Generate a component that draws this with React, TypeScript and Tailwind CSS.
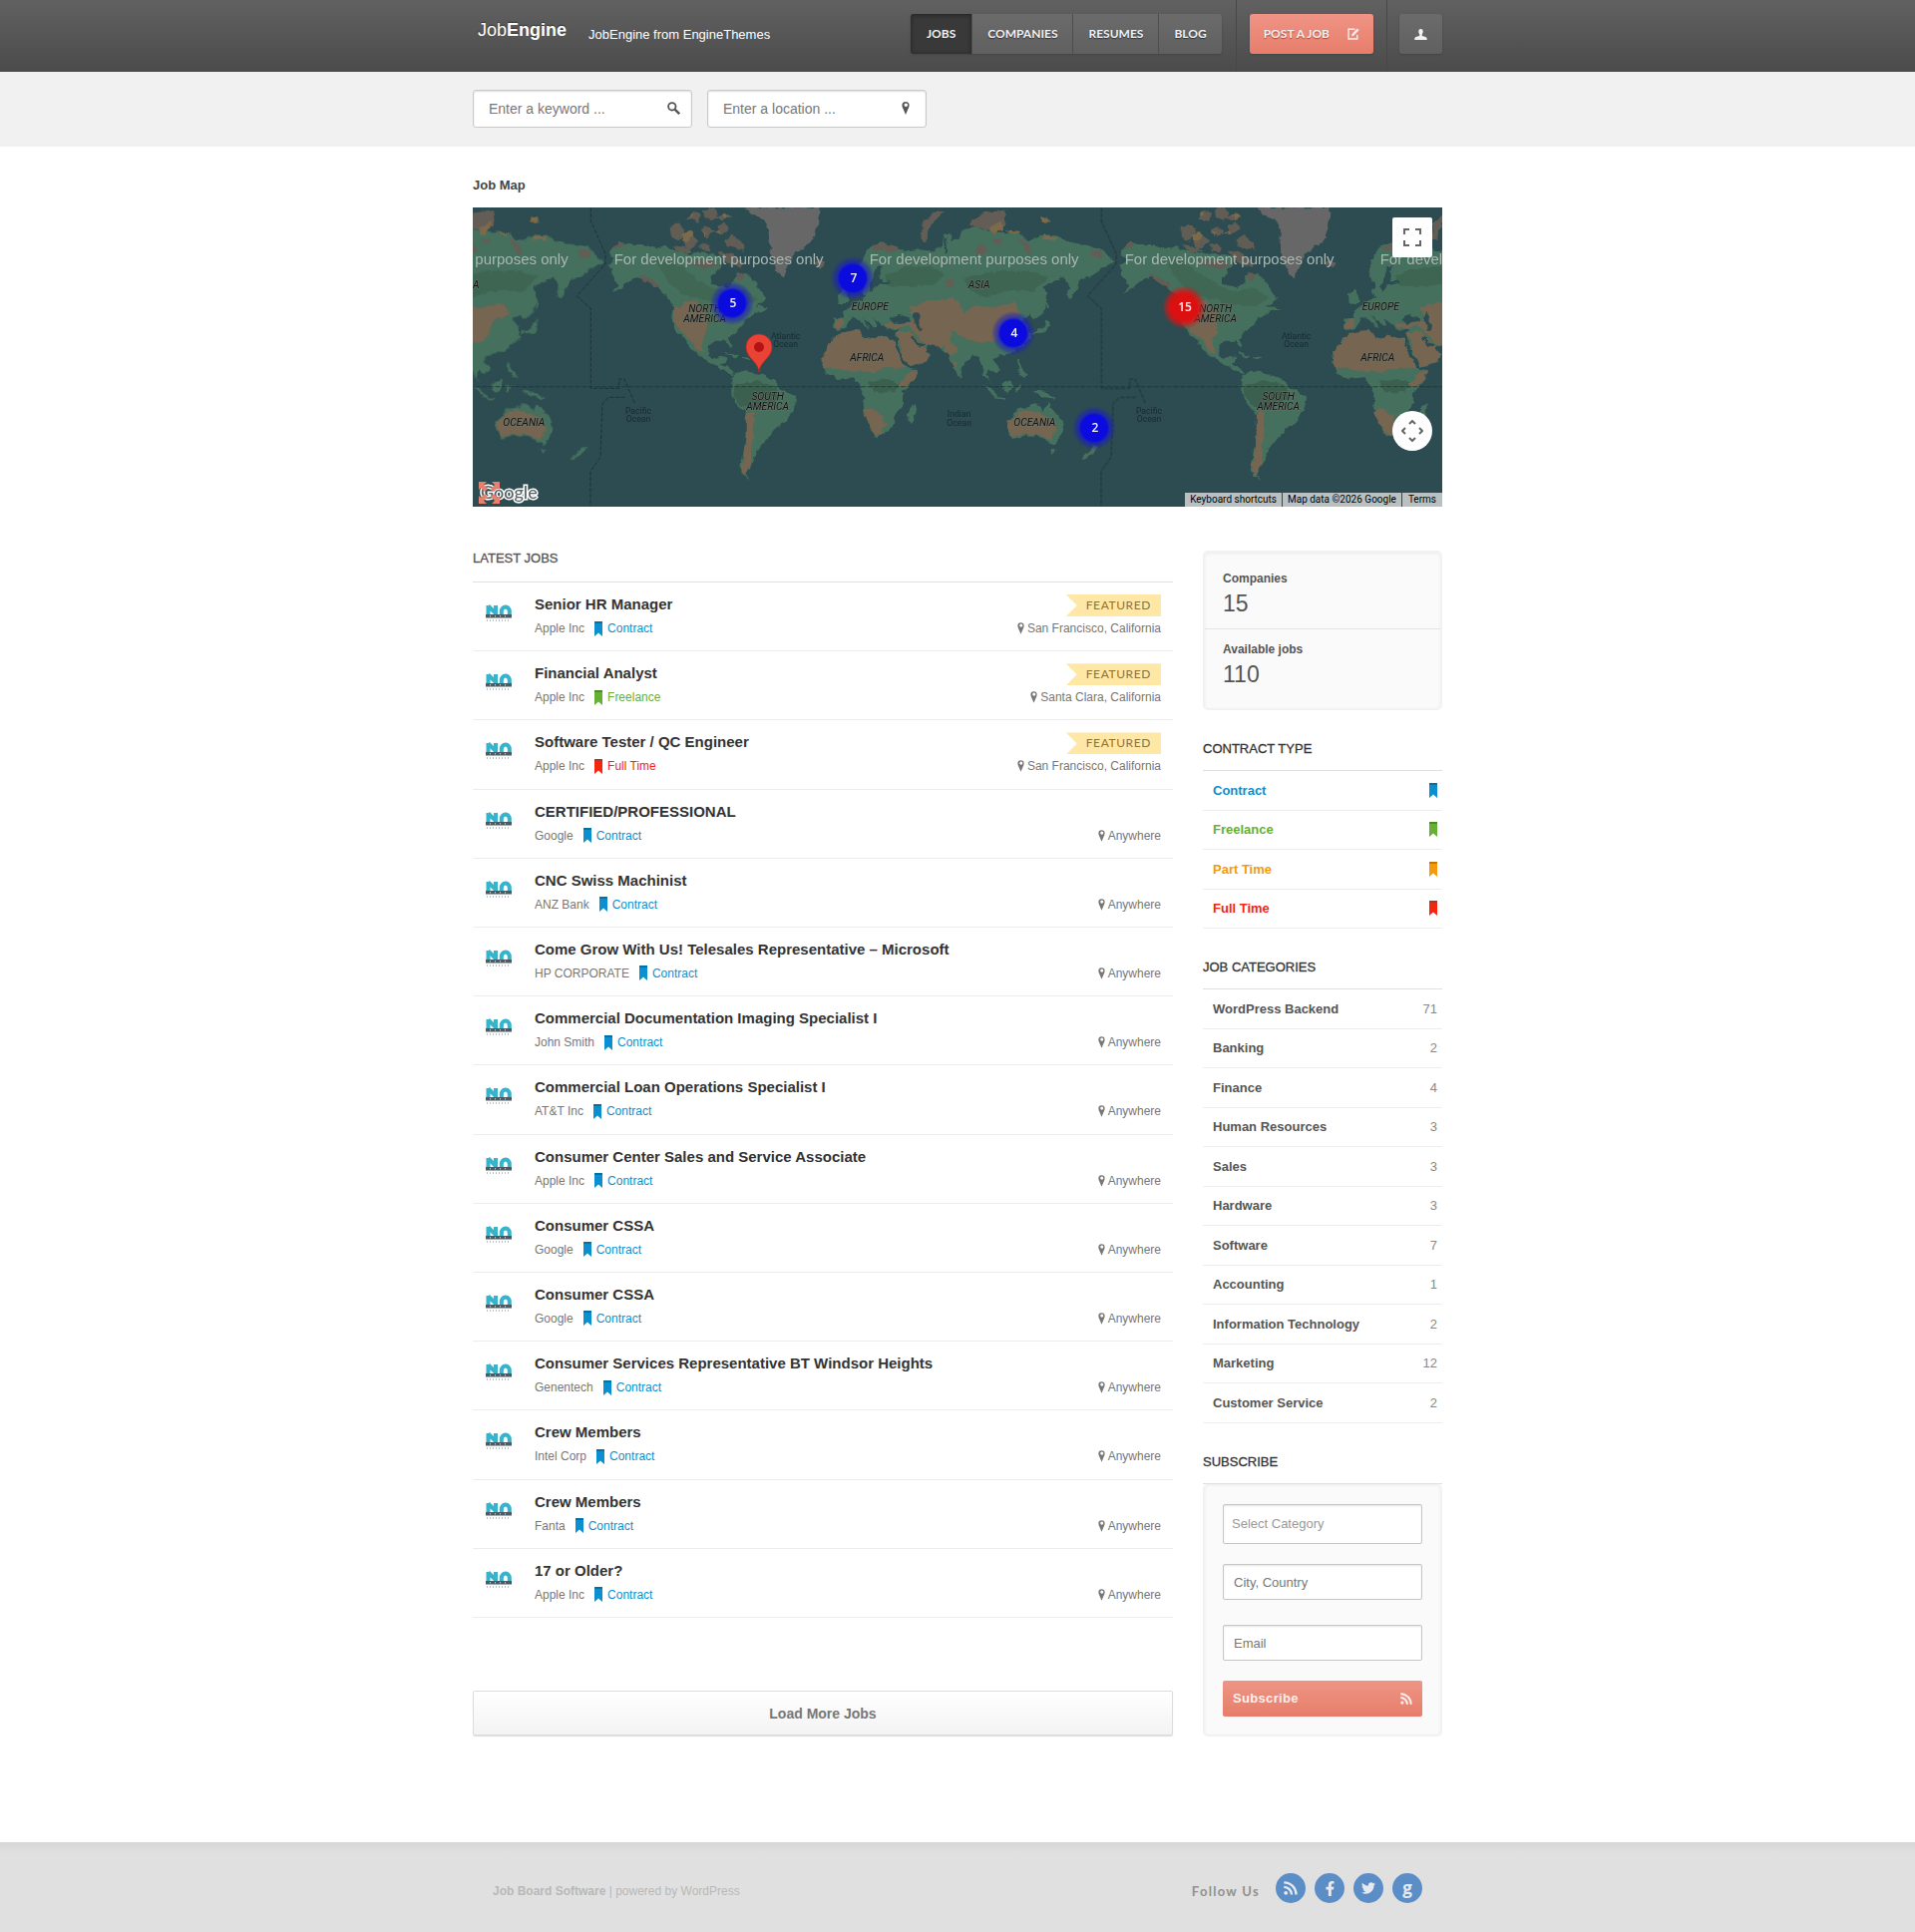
import React from 'react';
import { FaFacebookF, FaTwitter } from 'react-icons/fa';

type ContractKey = 'Contract' | 'Freelance' | 'Part Time' | 'Full Time';

interface Job {
  title: string;
  company: string;
  type: ContractKey;
  location: string;
  featured?: boolean;
}

const contractColors: Record<ContractKey, { text: string; fold: string }> = {
  Contract: { text: 'text-[#0a8fd0]', fold: '#066fa3' },
  Freelance: { text: 'text-[#65b035]', fold: '#4c8a24' },
  'Part Time': { text: 'text-[#f59a0c]', fold: '#c27504' },
  'Full Time': { text: 'text-[#f5250f]', fold: '#b8301f' },
};

const jobs: Job[] = [
  { title: 'Senior HR Manager', company: 'Apple Inc', type: 'Contract', location: 'San Francisco, California', featured: true },
  { title: 'Financial Analyst', company: 'Apple Inc', type: 'Freelance', location: 'Santa Clara, California', featured: true },
  { title: 'Software Tester / QC Engineer', company: 'Apple Inc', type: 'Full Time', location: 'San Francisco, California', featured: true },
  { title: 'CERTIFIED/PROFESSIONAL', company: 'Google', type: 'Contract', location: 'Anywhere' },
  { title: 'CNC Swiss Machinist', company: 'ANZ Bank', type: 'Contract', location: 'Anywhere' },
  { title: 'Come Grow With Us! Telesales Representative – Microsoft', company: 'HP CORPORATE', type: 'Contract', location: 'Anywhere' },
  { title: 'Commercial Documentation Imaging Specialist I', company: 'John Smith', type: 'Contract', location: 'Anywhere' },
  { title: 'Commercial Loan Operations Specialist I', company: 'AT&T Inc', type: 'Contract', location: 'Anywhere' },
  { title: 'Consumer Center Sales and Service Associate', company: 'Apple Inc', type: 'Contract', location: 'Anywhere' },
  { title: 'Consumer CSSA', company: 'Google', type: 'Contract', location: 'Anywhere' },
  { title: 'Consumer CSSA', company: 'Google', type: 'Contract', location: 'Anywhere' },
  { title: 'Consumer Services Representative BT Windsor Heights', company: 'Genentech', type: 'Contract', location: 'Anywhere' },
  { title: 'Crew Members', company: 'Intel Corp', type: 'Contract', location: 'Anywhere' },
  { title: 'Crew Members', company: 'Fanta', type: 'Contract', location: 'Anywhere' },
  { title: '17 or Older?', company: 'Apple Inc', type: 'Contract', location: 'Anywhere' },
];

const contractTypes: ContractKey[] = ['Contract', 'Freelance', 'Part Time', 'Full Time'];

const categories: [string, number][] = [
  ['WordPress Backend', 71],
  ['Banking', 2],
  ['Finance', 4],
  ['Human Resources', 3],
  ['Sales', 3],
  ['Hardware', 3],
  ['Software', 7],
  ['Accounting', 1],
  ['Information Technology', 2],
  ['Marketing', 12],
  ['Customer Service', 2],
];

/* ---------- icons ---------- */

const PinIcon = ({ className }: { className?: string }) => (
  <svg viewBox="0 0 8 13" className={className} fill="currentColor" fillRule="evenodd" aria-hidden="true">
    <path d="M4 0a3.6 3.6 0 0 0-3.6 3.6C.4 5 1 6.2 1.7 7.6L4 13l2.3-5.4C7 6.2 7.6 5 7.6 3.6A3.6 3.6 0 0 0 4 0zM4.300 1.400a1.800 1.800 0 1 1 0 3.600 1.800 1.800 0 0 1 0-3.600z" />
  </svg>
);

const SearchIcon = ({ className }: { className?: string }) => (
  <svg viewBox="0 0 13 13" className={className} fill="none" stroke="currentColor" aria-hidden="true">
    <circle cx="4.800" cy="4.800" r="3.700" strokeWidth="1.800" />
    <path d="M7.600 7.600l4.600 4.600" strokeWidth="2.400" />
  </svg>
);

const EditIcon = () => (
  <svg viewBox="0 0 12 12" className="h-3 w-3" fill="none" stroke="currentColor" aria-hidden="true">
    <path d="M7.500 1.200H1v9.800h8.800V7" strokeWidth="1.400" />
    <path d="M4 8.500l.6-2.400L9.800.6l1.700 1.600-5.300 5.600z" fill="currentColor" stroke="none" />
  </svg>
);

const UserIcon = () => (
  <svg viewBox="0 0 13 11" className="h-[11px] w-[13px]" fill="currentColor" aria-hidden="true">
    <path d="M6.500 0C4.900 0 4.200 1.200 4.300 2.800c.1 1.300.5 2.100 1 2.700v1.200C4.500 7.300.3 7.700.3 9.800V11h12.400V9.800c0-2.100-4.200-2.500-5-3.100V5.500c.5-.6.9-1.400 1-2.700C8.800 1.200 8.100 0 6.500 0z" />
  </svg>
);

const RssIcon = ({ className }: { className?: string }) => (
  <svg viewBox="0 0 14 14" className={className} fill="none" stroke="currentColor" strokeWidth="2.400" aria-hidden="true">
    <circle cx="2.200" cy="11.800" r="1.900" fill="currentColor" stroke="none" />
    <path d="M.3 5.900a7.700 7.700 0 0 1 7.700 7.700M.3 1.400a12.200 12.200 0 0 1 12.200 12.200" />
  </svg>
);

const Bookmark = ({ type }: { type: ContractKey }) => (
  <svg viewBox="0 0 8 15" className={`h-[15px] w-2 shrink-0 ${contractColors[type].text}`} aria-hidden="true">
    <path d="M0 0h8v15L4 11.500 0 15z" fill="currentColor" />
    <path d="M0 0h8v2H0z" fill={contractColors[type].fold} />
  </svg>
);

// "No logo available" placeholder used for every company
const NoLogo = () => (
  <svg viewBox="0 0 26 18" className="h-[18px] w-[26px]" role="img" aria-label="No logo available">
    <g fill="none" stroke="#35b4cb" strokeWidth="4">
      <path d="M2.500 10V1M10 10V1M2.500 1.500L10 9" />
      <path d="M15.800 10V7a4 4.500 0 0 1 8 0v3" />
    </g>
    <path d="M0 10h26v3.500H0z" fill="#4b5a63" />
    <path d="M4 11.700h18" stroke="#b6c3c9" strokeWidth="1.500" strokeDasharray="1 4" />
    <path d="M1 16h24" stroke="#a3aeb3" strokeWidth="1.400" strokeDasharray="1 2" />
  </svg>
);

/* ---------- map ---------- */

const Americas = () => (
  <g>
    <g fill="#45705d">
      <path d="M428 150L455 128 480 135 520 135 560 150 590 140 610 150 640 158 665 165 700 160 730 165 765 175 760 200 745 215 730 235 735 255 775 265 795 250 805 225 830 225 850 235 865 255 880 275 895 300 880 312 860 322 905 325 880 335 855 345 840 355 825 375 815 385 800 400 780 418 790 440 785 447 770 425 740 425 722 440 720 470 735 480 755 470 775 475 770 490 757 497 780 505 800 525 790 528 760 510 735 495 700 475 670 450 655 425 640 415 625 395 615 380 610 350 615 325 600 300 580 275 555 255 530 240 505 235 480 245 460 270 430 280 450 262 440 240 425 225 430 210 420 200 440 180 425 165z" />
      <path d="M790 535L815 515 850 520 880 525 920 545 935 570 985 590 980 620 965 650 955 670 920 690 905 715 885 735 870 750 860 780 850 800 835 825 845 842 825 830 815 810 825 770 835 700 835 650 810 620 790 590z" />
      <path d="M775 459l38 13-6 4-34-12zM822 474l26 4-8 5-18-3z" />
    </g>
    <g fill="#3c604f">
      <path d="M560 180l60 10 40 30 60 40 50 15 60-5 40 30-40 20-60 0-60-20-60-10-50-40z" opacity=".6" />
      <path d="M800 555l60-10 60 15 15 30-35 30-50 10-30-10-25-30z" />
    </g>
    <g fill="#756551">
      <path d="M615 320l25 8 10-26 35 5 30 33 0 60-15 20 8 42-16-4-22-32-30-28-25-32z" />
      <path d="M834 642l24 0 0 40-8 60-2 58-18 32-10-17 12-75z" />
    </g>
    <g fill="#615d55">
      <path d="M605 85l25-12 15 8 5 22-20 22-20-10zM645 120l22-16 25 18-15 18-22 12zM658 60l14-25 24 5-5 25zM708 30l26-5 18 18-20 22-20-10zM695 92l20-12 20 17-20 18zM748 80l26-13 8 22-26 18zM768 124l26-18 28 24 10 22-28-5-28-5zM612 138l36 5 22 16-36 0zM695 132l26 5 8 20-30-3zM745 155l45 10 36 28-8 10-38-12zM508 225l45 15 25 22-10 5-40-23zM665 180l70 5 18 15-36 8-46-12zM738 55l36-13 12 12-26 10zM808 218l20 8-5 16-18-5zM450 130l20 5-16 12-20 0z" />
    </g>
    <g fill="#7d6a4a">
      <path d="M640 105l24-10 12 13-22 20-12-5zM762 46l12-5 7 13-14 6zM702 96l12 5-7 12zM738 101l15-8 3 13zM664 42l10 0 0 8-10 4z" />
    </g>
    <path d="M832 25L1055 25 1050 80 1035 125 1000 150 975 170 960 200 948 235 930 225 915 180 905 130 905 90 890 60 850 45z" fill="#676767" />
    <path d="M1040 190l15-10 18 12-10 14-20-4z" fill="#655f5b" />
  </g>
);

const Eurasia = () => (
  <g transform="translate(1050 15)">
    <g fill="#45705d">
      <path d="M45 370L50 340 80 345 75 325 95 310 120 290 145 280 132 262 140 240 120 210 130 175 150 130 190 115 230 125 255 140 300 135 345 140 375 125 378 90 400 85 400 115 430 100 440 75 475 65 510 80 560 85 600 85 640 110 680 90 725 95 750 110 790 120 840 125 870 150 895 175 870 185 850 195 830 215 790 225 780 250 760 285 750 275 755 240 740 220 700 235 680 250 692 290 675 330 650 345 640 332 620 342 632 370 640 400 610 430 570 450 540 455 530 470 550 495 535 510 515 495 510 520 520 540 500 510 485 460 470 450 440 480 425 515 405 490 395 455 380 440 355 430 330 425 320 435 340 450 325 475 275 490 265 475 240 425 235 385 245 375 210 378 200 365 165 340 178 365 165 368 130 335 155 372 145 370 115 340 100 340 85 370 55 378z" />
      <path d="M10 470L25 430 50 400 70 385 120 378 145 405 180 395 228 405 235 430 250 465 270 495 300 498 290 525 255 565 255 600 235 630 228 660 205 690 175 700 160 680 145 640 135 615 140 580 125 545 110 520 60 525 30 510z" />
      <path d="M270 625l15-18 12-8-8 50-12 8-8-10zM500 545l15 5 30 28-12 0zM555 542l28-18 4 22-16 20-14-6zM530 578l35 4-2 5-32-4zM645 560l30 2 45 20-12 2-38-8zM598 545l14-4-6 22-8 2zM690 345l6 18-14 22-40 4 2-6 32-10zM684 282l8 0 3 30-6 0zM600 470l8 2 2 22 22 18-10 10-18-22zM60 270l20-18 12 30 0 14-30 4zM424 507l8 10-6 4zM830 725l12 6-12 15-30 22-10-2 28-26zM702 738l14 0-6 12z" />
    </g>
    <g fill="#3c604f">
      <path d="M200 215l60-25 80-5 35 20-10 30-60 10-90 0zM440 220l90-20 110 0 50 20-40 40-90 0-60 20-50-30z" opacity=".75" />
      <path d="M150 535l60-10 40 15-20 25-60 0z" />
    </g>
    <g fill="#756551">
      <path d="M10 470L25 430 50 400 70 385 120 378 145 405 180 395 228 405 240 445 265 492 200 490 170 505 90 500 20 490z" />
      <path d="M240 545l35-40 25-7-10 27-30 25zM135 622l25-7 35 20 10 25-15 35-20-5-20-35z" />
      <path d="M236 385l45 0 20 22 36 43-12 25-50 12-15-25zM275 310l25-10 40-10 60-8 30 18 10 30 30-28 50 8 70-15 20 35-50 20-20 50-20 15-40 0-40-15-40-20 0 50-30 2-50-12-30-40-20-14-60 8-10-15 70-5 30-15-20-15zM50 350l30-6-6 26-22 4zM380 420l30-2 10 20-20 18-18-14zM405 470l14 4-2 22-10-14z" />
    </g>
    <g fill="#645d55">
      <path d="M455 55l45-30 65-8-3 45-40 20-62-22zM310 100l8-50 40-30 16 2-34 40-16 50zM470 130l30-12 10 22-25 14zM525 100l30 5-10 18-20-6zM605 105l14-4 26 40-10 10zM815 140l40-4-5 24-30-6zM380 230l30-6 2 20-26 6zM160 130l40-14 50 14-20 12-60-4z" />
    </g>
    <g fill="#7d6a4a">
      <path d="M515 70l35-20 4 22-24 20zM560 78l50 6-10 8zM672 38l20-4 8 18-26 2zM680 92l44 8-4 8-40-4z" />
    </g>
    <path d="M568 650L580 640 600 615 640 608 650 598 670 605 680 625 690 595 700 610 735 650 738 680 715 722 690 715 660 695 620 695 585 705 575 690z" fill="#45705d" />
    <path d="M570 652L582 642 602 625 640 618 680 632 705 645 718 665 705 712 690 708 660 692 620 690 585 700 577 686z" fill="#756551" />
    {/* inland seas */}
    <g fill="#2c4c51">
      <path d="M222 345l20-16 30 14 4 10-30 4-22-2zM290 325l16 8-2 18 8 26-12 0-8-22-10-18zM230 424l8 0 36 62-6 6zM282 398l8 0 12 20 18 6-8 6-16-6zM178 190l14-6-8 30 6 18 24-2 4 6-40 8-16 20-8-20 14-24zM378 100l6 0 4 46-6 4z" />
    </g>
  </g>
);

const MapLines = () => (
  <g fill="none" stroke="#1d3237" strokeWidth="3" strokeDasharray="12 5">
    <path d="M367 25v40l45 100-2 30-85 95 42 38v240h85v-28h16l32 75" />
    <path d="M470 595h-50l-18 20-6 160-30 42v110" />
  </g>
);

const places: [number, number, string[]][] = [
  [710, 340, ['NORTH', 'AMERICA']],
  [899, 604, ['SOUTH', 'AMERICA']],
  [1207, 332, ['EUROPE']],
  [1198, 487, ['AFRICA']],
  [1535, 266, ['ASIA']],
  [1702, 682, ['OCEANIA']],
];

const oceans: [number, number, string][] = [
  [953, 420, 'Atlantic'],
  [510, 645, 'Pacific'],
  [1475, 655, 'Indian'],
];

// the world repeats horizontally; only labels that fall inside the viewport are drawn
const copies = [-1536, 0, 1536];
const inView = (x: number) => x > -10 && x < 2930;

const markers: [number, number, string][] = [
  [260, 96, '5'],
  [381, 71, '7'],
  [542, 126, '4'],
  [713, 100, '15'],
  [623, 221, '2'],
];

const WorldMap = () => (
  <svg viewBox="0 0 972 300" preserveAspectRatio="xMidYMid slice" className="absolute inset-0 h-full w-full" aria-hidden="true">
    <defs>
      <filter id="coast" x="0" y="0" width="100%" height="100%" colorInterpolationFilters="sRGB">
        <feTurbulence type="fractalNoise" baseFrequency="0.14" numOctaves="2" seed="4" />
        <feDisplacementMap in="SourceGraphic" scale="6" xChannelSelector="R" yChannelSelector="G" />
      </filter>
      <g id="world">
        <Americas />
        <Eurasia />
      </g>
      <radialGradient id="blueGlow">
        <stop offset="0.600" stopColor="#0b0be0" />
        <stop offset="0.700" stopColor="#1414d8" stopOpacity="0.600" />
        <stop offset="0.850" stopColor="#1c1cc8" stopOpacity="0.400" />
        <stop offset="1" stopColor="#1c1cc8" stopOpacity="0" />
      </radialGradient>
      <radialGradient id="redGlow">
        <stop offset="0.600" stopColor="#dc1010" />
        <stop offset="0.800" stopColor="#d81414" stopOpacity="0.600" />
        <stop offset="1" stopColor="#c81c1c" stopOpacity="0" />
      </radialGradient>
    </defs>
    <g filter="url(#coast)">
      <path d="M-10-10h992v320H-10z" fill="#2c4c51" />
      <g transform="translate(-4 -8) scale(.33333)">
        {copies.map((dx) => (
          <use key={dx} href="#world" x={dx} />
        ))}
      </g>
    </g>
    <g transform="translate(-4 -8) scale(.33333)">
      <path d="M0 562h2940" stroke="#1d3237" strokeWidth="3" strokeDasharray="14 6" />
      {copies.map((dx) => (
        <g key={dx}>
          <g transform={`translate(${dx} 0)`}>
            <MapLines />
          </g>
          {places
            .filter(([x]) => inView(x + dx))
            .map(([x, y, lines]) =>
              lines.map((line, i) => (
                <text
                  key={line}
                  x={x + dx}
                  y={y + i * 28}
                  textAnchor="middle"
                  fontSize="31"
                  fontStyle="italic"
                  fill="#101314"
                  stroke="#6d7468"
                  strokeWidth="3"
                  paintOrder="stroke"
                  className="font-['Roboto',sans-serif]"
                >
                  {line}
                </text>
              )),
            )}
          {oceans
            .filter(([x]) => inView(x + dx))
            .map(([x, y, name]) => (
              <text key={name} x={x + dx} y={y} textAnchor="middle" fontSize="26" fill="#172b30" className="font-['Roboto',sans-serif]">
                {name}
                <tspan x={x + dx} dy="25">
                  Ocean
                </tspan>
              </text>
            ))}
        </g>
      ))}
      {[-16, 752, 1520, 2288, 3056].map((x) => (
        <text key={x} x={x} y="194" textAnchor="middle" fontSize="45" fill="#a9b7b1" className="font-['Liberation_Sans',sans-serif]">
          For development purposes only
        </text>
      ))}
    </g>
    {markers.map(([x, y, n]) => (
      <g key={n}>
        <circle cx={x} cy={y} r="22" fill={n === '15' ? 'url(#redGlow)' : 'url(#blueGlow)'} />
        <text x={x + 1} y={y + 4} textAnchor="middle" fontSize="12" fontWeight="600" fill="#f2f2f2" className="font-['Open_Sans',sans-serif]">
          {n}
        </text>
      </g>
    ))}
    <path d="M287 165c-1-11-13-14-13-25a13 13 0 0 1 26 0c0 11-12 14-13 25z" fill="#ea4335" stroke="#c5221f" strokeWidth=".6" />
    <circle cx="287" cy="140" r="5" fill="#b31412" />
    <text x="8" y="292" fontSize="18" fontWeight="500" fill="#5a6467" stroke="#fff" strokeWidth="3" paintOrder="stroke" className="font-['Lato',sans-serif]">
      Google
    </text>
    <path
      d="M6 275h8l-3 3 4 4-3 3-4-4-2 2zM27 275h-8l3 3-4 4 3 3 4-4 2 2zM6 297h8l-3-3 4-4-3-3-4 4-2-2zM27 297h-8l3-3-4-4 3-3 4 4 2-2z"
      fill="#e9806f"
    />
  </svg>
);

const JobMap = () => (
  <div className="relative h-[300px] overflow-hidden bg-[#2c4c51]">
    <WorldMap />
    <button className="absolute right-[10px] top-[10px] flex h-10 w-10 items-center justify-center rounded-xs bg-white text-[#666]" aria-label="Toggle fullscreen view">
      <svg viewBox="0 0 18 18" className="h-[18px] w-[18px]" fill="none" stroke="currentColor" strokeWidth="2">
        <path d="M1 6V1h5M12 1h5v5M17 12v5h-5M6 17H1v-5" />
      </svg>
    </button>
    <button className="absolute bottom-14 right-[10px] flex h-10 w-10 items-center justify-center rounded-full bg-white text-[#666]" aria-label="Map camera controls">
      <svg viewBox="0 0 22 22" className="h-[22px] w-[22px]" fill="none" stroke="currentColor" strokeWidth="2">
        <path d="M8 4l3-3 3 3M8 18l3 3 3-3M4 8l-3 3 3 3M18 8l3 3-3 3" />
      </svg>
    </button>
    <div className="absolute bottom-0 right-0 flex h-[14px] divide-x divide-[#2c4c51] bg-[#b8c0c2] font-['Roboto',sans-serif] text-[10px] leading-[14px] text-black">
      <button className="px-[5px]">Keyboard shortcuts</button>
      <span className="px-[5px]">Map data ©2026 Google</span>
      <a href="#terms" className="px-[6px]">
        Terms
      </a>
    </div>
  </div>
);

/* ---------- page ---------- */

const navItems = ['COMPANIES', 'RESUMES', 'BLOG'];

const Header = () => (
  <header className="bg-linear-to-b from-[#616161] to-[#4b4b4b]">
    <div className="mx-auto flex h-[72px] max-w-[972px] justify-between">
      <div className="flex items-start pl-[5px] text-white">
        <a href="#home" className="mt-[18px] text-[18px] leading-6 [text-shadow:0_-1px_1px_#333]">
          Job<b>Engine</b>
        </a>
        <p className="ml-[22px] mt-[25px] text-[13px] leading-5">JobEngine from EngineThemes</p>
      </div>
      <div className="flex font-['Lato',sans-serif] text-xs font-bold text-[#f2f2f2] [text-shadow:0_1px_1px_#333]">
        <nav className="mt-[14px] mr-[14px] flex h-10 divide-x divide-[#4e4e4e] overflow-hidden rounded-[3px] bg-linear-to-b from-[#6b6b6b] to-[#606060] shadow-[0_1px_2px_#444]">
          <a href="#jobs" className="flex items-center bg-[#393939] px-4 shadow-[inset_0_1px_4px_#222]">
            JOBS
          </a>
          {navItems.map((item) => (
            <a key={item} href={`#${item.toLowerCase()}`} className="flex items-center px-[15px]">
              {item}
            </a>
          ))}
        </nav>
        <div className="border-x border-[#484848] px-[13px] pt-[14px]">
          <a href="#post" className="flex h-10 items-center gap-[18px] rounded-[3px] bg-linear-to-b from-[#f09486] to-[#e77d6a] px-[14px] shadow-[0_1px_2px_#444] [text-shadow:0_1px_1px_#a54a3a]">
            POST A JOB
            <EditIcon />
          </a>
        </div>
        <button className="ml-3 mt-[14px] flex h-10 w-[43px] items-center justify-center rounded-[3px] bg-linear-to-b from-[#6b6b6b] to-[#606060] shadow-[0_1px_2px_#444]" aria-label="Log in">
          <UserIcon />
        </button>
      </div>
    </div>
  </header>
);

const searchInput =
  'h-[38px] w-full rounded-[3px] border border-[#c9c9c9] bg-white pl-[15px] pr-10 text-sm text-[#555] shadow-[inset_0_1px_2px_#ddd] placeholder:text-[#777]';

const SearchBar = () => (
  <div className="bg-[#f1f1f1]">
    <form className="mx-auto flex h-[75px] max-w-[972px] gap-[15px] pt-[18px]">
      <div className="relative h-[38px] w-[220px]">
        <input type="text" aria-label="Keyword" placeholder="Enter a keyword ..." className={searchInput} />
        <SearchIcon className="absolute right-3 top-3 h-[13px] w-[13px] text-[#555]" />
      </div>
      <div className="relative h-[38px] w-[220px]">
        <input type="text" aria-label="Location" placeholder="Enter a location ..." className={searchInput} />
        <PinIcon className="absolute right-[17px] top-3 h-[13px] w-2 text-[#555]" />
      </div>
    </form>
  </div>
);

const JobRow = ({ job }: { job: Job }) => (
  <li className="flex justify-between border-b border-[#ededed] pr-3 pt-3">
    <div className="flex">
      <div className="ml-[13px] mr-[23px] mt-[10px]">
        <NoLogo />
      </div>
      <div>
        <h3 className="text-[15px] font-bold leading-5 text-[#333]">
          <a href="#job">{job.title}</a>
        </h3>
        <div className="mt-1 flex h-5 items-center text-xs text-[#777]">
          <a href="#company">{job.company}</a>
          <a href="#type" className={`ml-[10px] flex items-center gap-[5px] ${contractColors[job.type].text}`}>
            <Bookmark type={job.type} />
            {job.type}
          </a>
        </div>
      </div>
    </div>
    <div className="flex flex-col items-end">
      <div className="h-[22px]">
        {job.featured && (
          <span className="flex h-full items-center bg-[#ffe8a6] pl-5 pr-[10px] font-['Lato',sans-serif] text-xs tracking-wider text-[#8f7430] [clip-path:polygon(0_0,100%_0,100%_100%,0_100%,11px_50%)]">
            FEATURED
          </span>
        )}
      </div>
      <div className="mt-[2px] flex h-5 items-center gap-[3px] text-xs text-[#777]">
        <PinIcon className="h-3 w-[7px]" />
        {job.location}
      </div>
    </div>
  </li>
);

const SideHeading = ({ children }: { children: React.ReactNode }) => (
  <h2 className="border-b border-[#e0e0e0] pb-[11px] text-[13px] leading-5 text-[#333] [-webkit-text-stroke:0.3px_#333]">{children}</h2>
);

const field = 'w-full rounded-[2px] border border-[#c6c6c6] bg-white text-[13px] shadow-[inset_0_1px_2px_#e4e4e4]';

const Sidebar = () => (
  <aside className="w-60 shrink-0">
    <div className="h-40 rounded-[5px] border-2 border-[#f2f2f2] bg-[#fafafa] text-[#555] shadow-[inset_0_1px_3px_#ececec]">
      <div className="h-[77px] border-b border-[#e4e4e4] px-[18px] pt-4">
        <h4 className="text-xs font-bold leading-5">Companies</h4>
        <p className="text-[23px] leading-[30px]">15</p>
      </div>
      <div className="px-[18px] pt-[10px]">
        <h4 className="text-xs font-bold leading-5">Available jobs</h4>
        <p className="text-[23px] leading-[30px]">110</p>
      </div>
    </div>

    <div className="mt-[29px]">
      <SideHeading>CONTRACT TYPE</SideHeading>
      <ul className="grid min-h-[158px] auto-rows-fr text-[13px] font-bold">
        {contractTypes.map((type) => (
          <li key={type} className="border-b border-[#ededed]">
            <a href="#type" className={`flex h-full items-center justify-between pl-[10px] pr-[5px] ${contractColors[type].text}`}>
              {type}
              <Bookmark type={type} />
            </a>
          </li>
        ))}
      </ul>
    </div>

    <div className="mt-[29px]">
      <SideHeading>JOB CATEGORIES</SideHeading>
      <ul className="grid min-h-[435px] auto-rows-fr text-[13px] font-bold text-[#555]">
        {categories.map(([name, count]) => (
          <li key={name} className="border-b border-[#ededed]">
            <a href="#category" className="flex h-full items-center justify-between pl-[10px] pr-[5px]">
              {name}
              <span className="font-normal text-[#888]">{count}</span>
            </a>
          </li>
        ))}
      </ul>
    </div>

    <div className="mt-[29px]">
      <SideHeading>SUBSCRIBE</SideHeading>
      <form className="rounded-[5px] border-2 border-t-0 border-[#f2f2f2] bg-[#fafafa] px-[18px] pb-[18px] pt-5 shadow-[inset_0_1px_3px_#ececec]">
        <select aria-label="Category" className={`block h-10 appearance-none px-2 text-[#999] ${field}`}>
          <option>Select Category</option>
        </select>
        <input type="text" aria-label="City, Country" placeholder="City, Country" className={`mt-5 block h-9 px-[10px] placeholder:text-[#777] ${field}`} />
        <input type="email" aria-label="Email" placeholder="Email" className={`mt-[25px] block h-9 px-[10px] placeholder:text-[#777] ${field}`} />
        <button
          type="button"
          className="mt-5 flex h-9 w-full items-center justify-between rounded-[2px] bg-linear-to-b from-[#ee9585] to-[#e77d6a] px-[10px] text-[13px] font-bold tracking-wide text-[#fdeee9]"
        >
          Subscribe
          <RssIcon className="h-3 w-3" />
        </button>
      </form>
    </div>
  </aside>
);

const social = [
  { label: 'RSS', icon: <RssIcon className="h-[14px] w-[14px]" /> },
  { label: 'Facebook', icon: <FaFacebookF size={15} /> },
  { label: 'Twitter', icon: <FaTwitter size={14} /> },
  { label: 'Google', icon: <span className="font-['Open_Sans',sans-serif] text-[17px] font-bold leading-6">g</span> },
];

const Footer = () => (
  <footer className="bg-linear-to-b from-[#d6d6d6] to-[#e0e0e0] to-12%">
    <div className="mx-auto flex h-[90px] max-w-[972px] items-start justify-between px-5 pt-[31px]">
      <p className="pt-2 text-xs leading-5 text-[#b8b8b8]">
        <b>Job Board Software</b> | powered by WordPress
      </p>
      <div className="flex gap-[9px]">
        <span className="mr-[7px] pt-2 font-['Lato',sans-serif] text-[13px] font-bold leading-5 tracking-widest text-[#909090]">Follow Us</span>
        {social.map(({ label, icon }) => (
          <a key={label} href="#follow" aria-label={label} className="flex h-[30px] w-[30px] items-center justify-center rounded-full bg-[#5b8dc6] text-[#e6eaf0]">
            {icon}
          </a>
        ))}
      </div>
    </div>
  </footer>
);

const App: React.FC = () => (
  <div className="bg-white font-['Liberation_Sans',Arial,sans-serif]">
    <Header />
    <SearchBar />
    <main className="mx-auto max-w-[972px] pb-[106px] pt-[29px]">
      <h2 className="mb-3 text-[13px] font-bold leading-5 text-[#444]">Job Map</h2>
      <JobMap />
      <div className="mt-11 flex items-start gap-[30px]">
        <section className="min-w-0 flex-1">
          <h2 className="border-b border-[#e0e0e0] pb-[15px] text-[13px] leading-4 text-[#555] [-webkit-text-stroke:0.3px_#555]">LATEST JOBS</h2>
          <ul className="grid min-h-[1038px] auto-rows-fr">
            {jobs.map((job, i) => (
              <JobRow key={i} job={job} />
            ))}
          </ul>
          <button className="mt-[73px] h-[45px] w-full rounded-[2px] border border-[#dcdcdc] bg-linear-to-b from-white to-[#f3f3f3] text-sm font-bold text-[#777] shadow-[0_1px_1px_#ddd]">
            Load More Jobs
          </button>
        </section>
        <Sidebar />
      </div>
    </main>
    <Footer />
  </div>
);

export default App;
